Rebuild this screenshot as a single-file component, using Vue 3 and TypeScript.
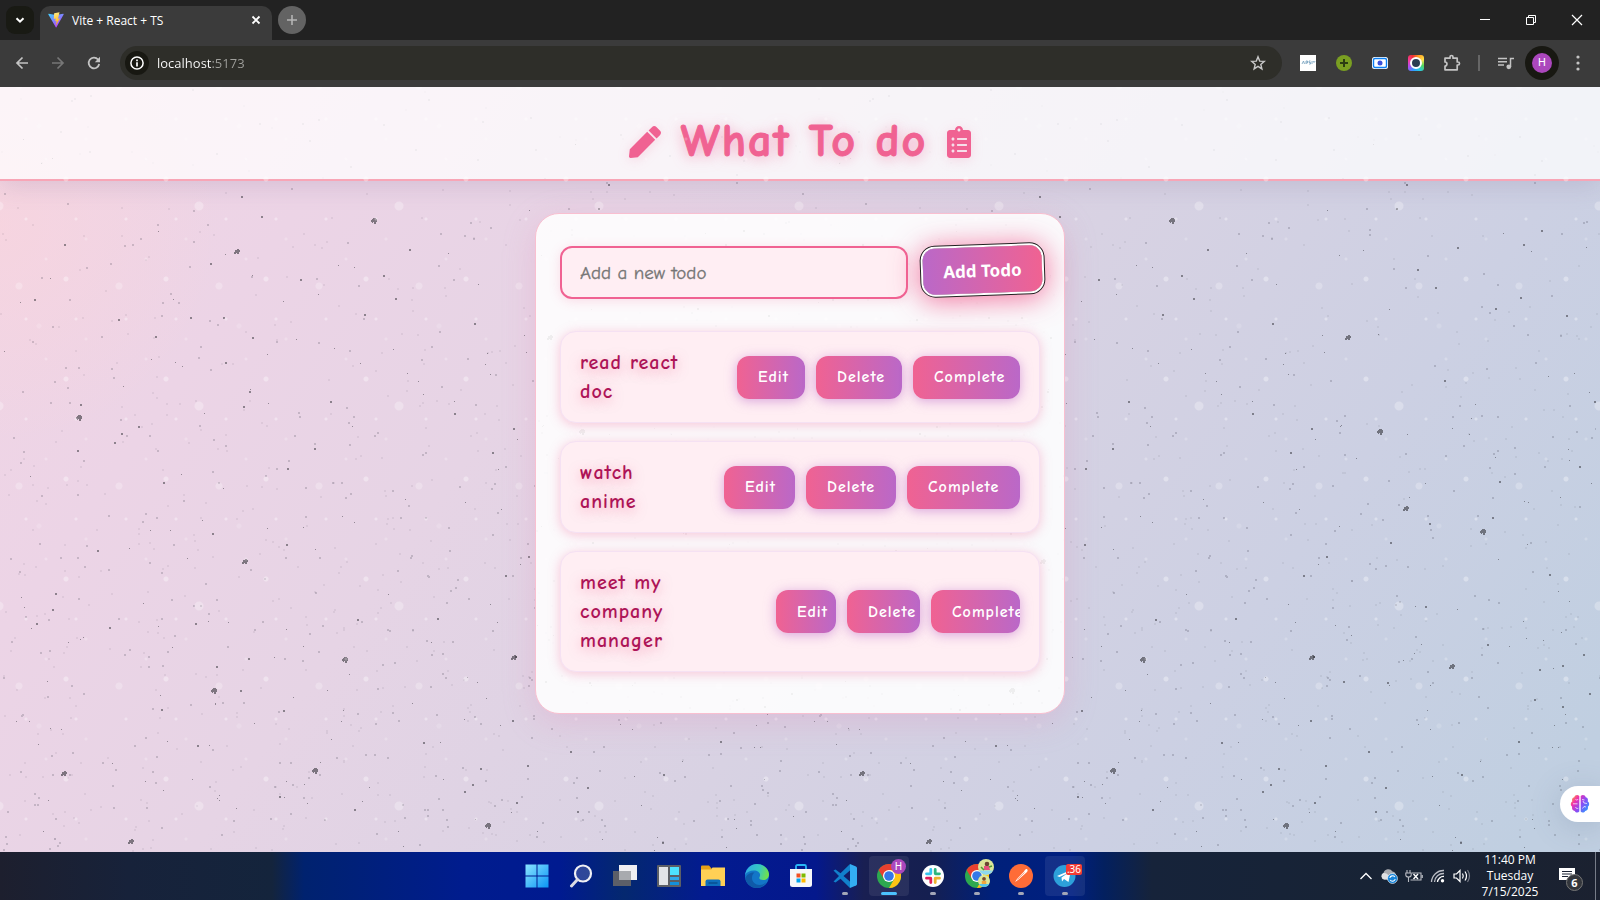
<script setup lang="ts">
import { ref } from 'vue'

interface Todo {
  id: number
  text: string
  size: 'regular' | 'roomy' | 'tight'
}

const address = ref('localhost:5173')
const draft = ref('')
const todos = ref<Todo[]>([
  { id: 1, text: 'read react doc', size: 'regular' },
  { id: 2, text: 'watch anime', size: 'roomy' },
  { id: 3, text: 'meet my company manager', size: 'tight' },
])

function addTodo() {
  const text = draft.value.trim()
  if (!text) return
  todos.value.push({ id: Date.now(), text, size: 'regular' })
  draft.value = ''
}

function removeTodo(id: number) {
  todos.value = todos.value.filter((t) => t.id !== id)
}

/* Paper texture: one tile of ink flecks, repeated across the page. */
const TILE_W = 798
const TILE_H = 768

const flecks: number[][] = [
  [64, 157], [34, 212], [241, 109], [261, 129], [210, 176], [300, 192], [383, 188], [409, 162], [395, 211],
  [364, 227], [474, 236], [118, 232], [223, 230], [155, 249], [252, 250], [190, 230], [225, 275], [249, 304],
  [243, 319], [314, 361], [80, 317], [138, 339], [121, 346], [114, 355], [77, 363], [287, 381], [163, 395],
  [330, 314], [454, 326], [492, 365], [212, 446], [97, 463], [286, 457], [55, 506], [52, 522], [36, 536],
  [109, 540], [195, 536], [216, 579], [248, 571], [240, 603], [161, 622], [283, 623], [197, 658], [279, 709],
  [354, 722], [357, 532], [437, 531], [480, 681], [505, 488], [515, 569], [472, 697], [464, 704], [423, 655],
  [598, 121], [608, 97], [743, 143], [725, 157], [659, 160], [619, 182], [637, 200], [697, 221], [722, 210],
  [768, 228], [513, 341], [694, 430], [796, 314], [781, 379], [701, 394], [646, 293], [592, 455], [631, 436],
  [751, 487], [627, 519], [545, 594], [589, 595], [741, 582], [764, 578], [785, 567], [791, 606], [764, 619],
  [736, 612], [720, 654], [663, 687], [662, 755], [587, 700], [577, 724], [570, 664], [512, 633], [527, 678],
  [516, 715], [528, 469], [689, 557],
]
const blots: number[][] = [
  [374, 134], [237, 165], [79, 331], [245, 475], [345, 573], [64, 687], [315, 684], [131, 755], [488, 739],
  [550, 251], [582, 345], [608, 422], [685, 445], [654, 580], [214, 604], [514, 571],
]

function seeded(seed: number) {
  let s = seed
  return () => {
    s = (s * 16807) % 2147483647
    return s / 2147483647
  }
}

const random = seeded(5173)

function grains(count: number, size: number): string {
  let d = ''
  for (let i = 0; i < count; i++) {
    const x = Math.floor(random() * TILE_W)
    const y = Math.floor(Math.pow(random(), 0.68) * TILE_H)
    d += `M${x} ${y}h${size}v${size}h-${size}z`
  }
  return d
}

const haze = grains(620, 2)
const grit = grains(430, 2)
const grain = grains(190, 1)
const fleckPath = flecks.map(([x, y]) => `M${x} ${y}h2v2h-2z`).join('')
const blotPath = blots
  .map(([x, y], i) =>
    i % 2
      ? `M${x - 3} ${y}h1v-2h2v-1h2v1h1v2h-1v2h-2v-1h-1v1h-2z`
      : `M${x - 3} ${y - 1}h1v-1h1v-1h3v1h1v3h-1v2h-2v-2h-1v1h-1v-1h-1z`,
  )
  .join('')
</script>

<template>
  <div class="screen">
    <header class="browser">
      <div class="tabs">
        <button class="tab-search" aria-label="Search tabs">
          <svg width="10" height="10" viewBox="0 0 10 10"><path d="M1.5 3.2 5 6.7l3.5-3.5" fill="none" stroke="#fff" stroke-width="2" /></svg>
        </button>
        <div class="tab">
          <svg width="16" height="16" viewBox="0 0 32 32">
            <defs>
              <linearGradient id="vite-a" x1="0" y1="0" x2=".7" y2="1"><stop offset="0" stop-color="#41d1ff" /><stop offset="1" stop-color="#bd34fe" /></linearGradient>
              <linearGradient id="vite-b" x1=".4" y1="0" x2=".6" y2="1"><stop offset="0" stop-color="#ffea83" /><stop offset="1" stop-color="#ffa800" /></linearGradient>
            </defs>
            <path d="m31.3 4.800-14.400 25.900c-.3.5-1 .5-1.300 0L.7 4.800c-.3-.6.2-1.300.800-1.200l14.500 2.600 14.400-2.600c.7-.1 1.200.6.900 1.200z" fill="url(#vite-a)" />
            <path d="M23 .5 12.300 2.600l-.6 11.200 3.900-.9-1.300 5.800 3-.9-2 9.700 8.700-15-4 .8z" fill="url(#vite-b)" />
          </svg>
          <span class="tab-title">Vite + React + TS</span>
          <button class="tab-close" aria-label="Close tab">
            <svg width="10" height="10" viewBox="0 0 10 10"><path d="m1.500 1.500 7 7m0-7-7 7" stroke="#fff" stroke-width="1.800" /></svg>
          </button>
        </div>
        <button class="tab-new" aria-label="New tab">
          <svg width="12" height="12" viewBox="0 0 12 12"><path d="M6 1v10M1 6h10" stroke="#b5b5b5" stroke-width="1.600" /></svg>
        </button>
        <div class="window-controls">
          <button aria-label="Minimize"><svg width="12" height="12" viewBox="0 0 12 12"><path d="M1 5.500h10" stroke="#fff" /></svg></button>
          <button aria-label="Restore"><svg width="12" height="12" viewBox="0 0 12 12"><path d="M1.500 3.500h7v7h-7zM3.500 3V1.500h7v7H9" fill="none" stroke="#fff" /></svg></button>
          <button aria-label="Close"><svg width="12" height="12" viewBox="0 0 12 12"><path d="m1 1 10 10M11 1 1 11" stroke="#fff" stroke-width="1.200" /></svg></button>
        </div>
      </div>
      <div class="toolbar">
        <button class="nav" aria-label="Back"><svg width="14" height="14" viewBox="0 0 14 14"><path d="M13 7H2m5.500-5.500L2 7l5.500 5.500" fill="none" stroke="#c4c4c4" stroke-width="1.700" /></svg></button>
        <button class="nav" aria-label="Forward"><svg width="14" height="14" viewBox="0 0 14 14"><path d="M1 7h11M6.500 1.500 12 7l-5.500 5.500" fill="none" stroke="#777" stroke-width="1.700" /></svg></button>
        <button class="nav" aria-label="Reload"><svg width="14" height="14" viewBox="0 0 14 14"><path d="M12.200 8A5.300 5.300 0 1 1 11 3.500l1.300 1.600" fill="none" stroke="#c4c4c4" stroke-width="1.800" /><path d="M13 .800v5.400H7.800z" fill="#c4c4c4" /></svg></button>
        <div class="omnibox">
          <button class="site-info" aria-label="Site information">
            <svg width="14" height="14" viewBox="0 0 14 14"><circle cx="7" cy="7" r="6.100" fill="none" stroke="#fff" stroke-width="1.500" /><path d="M7 6.300V10.400M7 3.600v1.700" stroke="#fff" stroke-width="1.700" /></svg>
          </button>
          <input v-model="address" class="address" type="text" aria-label="Address" />
          <button class="bookmark" aria-label="Bookmark this tab">
            <svg width="16" height="16" viewBox="0 0 16 16"><path d="m8 1.800 1.700 4.300 4.600.3-3.500 3 1.100 4.500L8 11.400l-3.900 2.500 1.100-4.500-3.500-3 4.600-.3z" fill="none" stroke="#c8c8c8" stroke-width="1.400" /></svg>
          </button>
        </div>
        <div class="extensions">
          <button aria-label="APSIY extension"><svg width="16" height="16" viewBox="0 0 16 16"><path d="M0 0h16v16H0z" fill="#fff" /><path d="m2 9 1.500-3 1 3M6 9V6h1.500v2H6M10.500 6H9v1.500h1.500V9H9M12 9V6m1 0 1 1.500L15.200 6" fill="none" stroke="#6f9dbb" stroke-width=".8" /></svg></button>
          <button aria-label="Plus extension"><svg width="16" height="16" viewBox="0 0 16 16"><circle cx="8" cy="8" r="8" fill="#7a9f22" /><path d="M8 4v8M4 8h8" stroke="#2c3d12" stroke-width="2" /></svg></button>
          <button aria-label="Recorder extension"><svg width="16" height="16" viewBox="0 0 16 16"><rect y="2" width="16" height="12" rx="2.500" fill="#fff" /><rect x="1.500" y="3.500" width="13" height="9" rx="1.500" fill="#fff" stroke="#0c7ff2" stroke-width="1.400" /><circle cx="8" cy="8" r="2.500" fill="#3a50d8" /></svg></button>
          <button aria-label="Lens extension"><span class="lens"><span></span></span></button>
          <button aria-label="Extensions"><svg width="18" height="18" viewBox="0 0 18 18"><path d="M2 4.200h5V3a1.500 1.500 0 0 1 3 0v1.200h4.200V8h.8a1.500 1.500 0 0 1 0 3h-.8v4.800H2V12c2.600 0 2.600-4 0-4z" fill="none" stroke="#c4c4c4" stroke-width="1.700" stroke-linejoin="round" /></svg></button>
        </div>
        <span class="divider"></span>
        <button class="media" aria-label="Media controls"><svg width="16" height="14" viewBox="0 0 16 14"><path d="M0 2.500h9M0 5.700h9M0 9h6" stroke="#c4c4c4" stroke-width="1.500" /><path d="M12.500 11V2.500H16" fill="none" stroke="#c4c4c4" stroke-width="1.500" /><circle cx="10.800" cy="10.800" r="2.400" fill="#c4c4c4" /></svg></button>
        <button class="profile" aria-label="Profile H"><span>H</span></button>
        <button class="menu" aria-label="Menu"><svg width="4" height="16" viewBox="0 0 4 16"><g fill="#c4c4c4"><circle cx="2" cy="2" r="1.600" /><circle cx="2" cy="8" r="1.600" /><circle cx="2" cy="14" r="1.600" /></g></svg></button>
      </div>
    </header>

    <div class="page">
      <svg class="texture" aria-hidden="true" width="100%" height="100%">
        <defs>
          <pattern id="paper" :width="TILE_W" :height="TILE_H" patternUnits="userSpaceOnUse">
            <path :d="haze" fill="#3c3c50" opacity=".08" />
            <path :d="grit" fill="#333340" opacity=".2" />
            <path :d="grain" fill="#2c2c34" opacity=".45" />
            <path :d="fleckPath" fill="#26262c" opacity=".48" />
            <path :d="blotPath" fill="#26262c" opacity=".55" />
          </pattern>
        </defs>
        <rect width="100%" height="100%" fill="url(#paper)" />
      </svg>

      <div class="title-bar">
        <h1>
          <svg width="32" height="32" viewBox="0 0 512 512"><path fill="currentColor" d="M290.740 93.240l128.020 128.020-277.990 277.990-114.140 12.600C11.350 513.540-1.560 500.620.14 485.340l12.700-114.220 277.900-277.880zm207.200-19.060l-60.110-60.110c-18.750-18.750-49.160-18.750-67.910 0l-56.550 56.550 128.020 128.020 56.550-56.550c18.750-18.760 18.750-49.160 0-67.910z" /></svg>
          <span>What To do</span>
          <svg width="24" height="32" viewBox="0 0 384 512"><path fill="currentColor" d="M336 64h-80c0-35.300-28.700-64-64-64s-64 28.700-64 64H48C21.500 64 0 85.500 0 112v352c0 26.500 21.500 48 48 48h288c26.500 0 48-21.500 48-48V112c0-26.500-21.500-48-48-48zM96 424c-13.300 0-24-10.700-24-24s10.700-24 24-24 24 10.700 24 24-10.700 24-24 24zm0-96c-13.300 0-24-10.700-24-24s10.700-24 24-24 24 10.700 24 24-10.700 24-24 24zm0-96c-13.300 0-24-10.700-24-24s10.700-24 24-24 24 10.700 24 24-10.700 24-24 24zm96-192c13.300 0 24 10.700 24 24s-10.700 24-24 24-24-10.700-24-24 10.700-24 24-24zm128 368c0 4.400-3.600 8-8 8H168c-4.400 0-8-3.600-8-8v-16c0-4.400 3.600-8 8-8h144c4.400 0 8 3.600 8 8v16zm0-96c0 4.400-3.600 8-8 8H168c-4.400 0-8-3.600-8-8v-16c0-4.400 3.600-8 8-8h144c4.400 0 8 3.600 8 8v16zm0-96c0 4.400-3.600 8-8 8H168c-4.400 0-8-3.600-8-8v-16c0-4.400 3.600-8 8-8h144c4.400 0 8 3.600 8 8v16z" /></svg>
        </h1>
      </div>

      <main class="card">
        <form class="add-form" @submit.prevent="addTodo">
          <input v-model="draft" type="text" placeholder="Add a new todo" aria-label="New todo" />
          <button type="submit">Add Todo</button>
        </form>
        <ul class="todos">
          <li v-for="todo in todos" :key="todo.id" class="todo" :class="todo.size">
            <span class="todo-text">{{ todo.text }}</span>
            <div class="actions">
              <button type="button">Edit</button>
              <button type="button" @click="removeTodo(todo.id)">Delete</button>
              <button type="button">Complete</button>
            </div>
          </li>
        </ul>
      </main>

      <button class="assistant" aria-label="Assistant">
        <svg width="20" height="20" viewBox="0 0 20 20">
          <defs><linearGradient id="brain" x1="0" y1=".1" x2="1" y2=".8"><stop offset="0" stop-color="#ffa928" /><stop offset=".28" stop-color="#f02fae" /><stop offset=".6" stop-color="#8a4cf5" /><stop offset="1" stop-color="#2b9bff" /></linearGradient></defs>
          <path d="M9.300 2C7.500.3 4.800 1 4.300 3.300 2.200 3.600 1.600 5.700 2.300 7.300.3 8.600.3 11.400 2.100 12.700 1.500 15 3 16.800 4.800 16.900c.9 2 3.400 2.100 4.500.6zM10.700 2c1.800-1.700 4.500-1 5 1.300 2.100.3 2.700 2.400 2 4 2 1.300 2 4.100.2 5.400.6 2.300-.9 4.100-2.700 4.200-.9 2-3.400 2.100-4.500.6z" fill="url(#brain)" />
          <path d="M3 9.800h4.500M5.500 5.500c1 .9 2.200.5 2.600-.5M5.500 13c.5 1.500 1.800 1.800 2.800 1.300M17 9.500l-3-.5-1-2M12 5.500l2.500.5M12.500 14.500l1.500-2 2 .5" fill="none" stroke="#fff" stroke-width=".9" opacity=".8" />
        </svg>
      </button>
    </div>

    <footer class="taskbar">
      <nav class="apps" aria-label="Taskbar">
        <button class="app" aria-label="Start">
          <svg width="24" height="24" viewBox="0 0 24 24"><defs><linearGradient id="win" x1="0" y1="0" x2="1" y2="1"><stop offset="0" stop-color="#8ae4ff" /><stop offset="1" stop-color="#0a95f5" /></linearGradient></defs><path d="M.5.500h11v11H.5zM12.500.500h11v11h-11zM.5 12.500h11v11H.5zM12.500 12.500h11v11h-11z" fill="url(#win)" /></svg>
        </button>
        <button class="app" aria-label="Search">
          <svg width="24" height="24" viewBox="0 0 24 24"><circle cx="14" cy="9.500" r="8" fill="#fff" fill-opacity=".18" stroke="#f0f0f4" stroke-width="2.200" /><path d="m8.500 15.500-6 6.500" stroke="#dcdce4" stroke-width="3" stroke-linecap="round" /></svg>
        </button>
        <button class="app" aria-label="Task view">
          <svg width="24" height="24" viewBox="0 0 24 24"><path d="M6 1h18v15H6z" fill="#f0f0f2" /><path d="M0 7h18v15H0z" fill="#5c5f68" /><path d="M6 7h12v9H6z" fill="#a8aaae" /></svg>
        </button>
        <button class="app" aria-label="Widgets">
          <svg width="24" height="24" viewBox="0 0 24 24"><rect y="1" width="24" height="22" rx="1" fill="#5c5f66" /><path d="M2 3h9v18H2z" fill="#e2e4e8" /><path d="M13 3h9v8h-9z" fill="#4de2ff" /><path d="M13 13h9v3h-9z" fill="#2fa8ea" /><path d="M13 18h9v3h-9z" fill="#1490dc" /></svg>
        </button>
        <button class="app" aria-label="File Explorer">
          <svg width="24" height="24" viewBox="0 0 24 24"><path d="M0 2.500q0-1 1-1h7l2.500 3V9H0z" fill="#e8a016" /><path d="M0 5.500h10l1.500-2H24v18.500H0z" fill="#ffd055" /><path d="M4.500 22v-4.500q0-2 2-2h11q2 0 2 2V22z" fill="#0e6ebd" /><path d="M7.500 19h9" stroke="#0a4f90" stroke-width="1.500" /></svg>
        </button>
        <button class="app" aria-label="Edge">
          <svg width="24" height="24" viewBox="0 0 24 24"><defs><linearGradient id="edge-a" x1="0" y1=".2" x2="1" y2=".4"><stop offset="0" stop-color="#2fa9e8" /><stop offset=".6" stop-color="#36c8c0" /><stop offset="1" stop-color="#6fe04c" /></linearGradient></defs><circle cx="12" cy="12" r="12" fill="#1376c8" /><path d="M.1 11C1 4.500 6 0 12 0c7 0 12 5 12 10.500 0 3.500-2.600 5.500-5.800 5.500-2.200 0-4-1-4-2 0-.8.900-1.300.9-3C15.100 8.500 12.300 6.500 9 6.500c-4 0-7.500 1.500-8.900 4.500z" fill="url(#edge-a)" /><path d="M9.500 8.500C7.500 10 7 12 7 14c0 4 3.500 7 7.500 7 3 0 5.500-1.300 7-3-2.500 4-6 6-9.500 6C6 24 1.500 20 .3 14.500 1.500 10.500 5.500 8 9.500 8.500z" fill="#0f5aa8" /></svg>
        </button>
        <button class="app" aria-label="Microsoft Store">
          <svg width="24" height="24" viewBox="0 0 24 24"><path d="M7 6V2.500Q7 1 8.500 1h7Q17 1 17 2.500V6" fill="none" stroke="#29b6f6" stroke-width="1.800" /><path d="M1 5h22v15.500q0 2.500-2.500 2.500h-17Q1 23 1 20.500z" fill="#f6f7f9" /><path d="M7.500 9.500h4v4h-4z" fill="#f25022" /><path d="M12.500 9.500h4v4h-4z" fill="#7fba00" /><path d="M7.500 14.500h4v4h-4z" fill="#00a4ef" /><path d="M12.500 14.500h4v4h-4z" fill="#ffb900" /></svg>
        </button>
        <button class="app running" aria-label="Visual Studio Code">
          <svg width="24" height="24" viewBox="0 0 24 24"><path d="M17 0 7.500 9.200 2.500 5.500.5 6.500 6 12 .5 17.500l2 1 5-3.700L17 24l.5-6L10.500 12l7-6z" fill="#1180cc" /><path d="m17 0 6 2.500q1 .5 1 1.500v16q0 1-1 1.500L17 24z" fill="#33adf3" /></svg>
        </button>
        <button class="app current" aria-label="Chrome, profile H">
          <svg width="24" height="24" viewBox="0 0 24 24"><circle cx="12" cy="12" r="12" fill="#2da94f" /><path d="M1.600 6A12 12 0 0 1 22.400 6H12L7 15z" fill="#e8402f" /><path d="M22.400 6A12 12 0 0 1 12 24l5.200-9L12 6z" fill="#fdc413" /><circle cx="12" cy="12" r="6" fill="#fff" /><circle cx="12" cy="12" r="4.800" fill="#3478e8" /></svg>
          <span class="badge purple">H</span>
        </button>
        <button class="app running" aria-label="Slack">
          <svg width="24" height="24" viewBox="0 0 24 24"><circle cx="12" cy="12" r="11" fill="#fff" /><g fill="none" stroke-width="2.800" stroke-linecap="round"><path d="M9.800 5.500v4M5.500 9.800h4" stroke="#36c5f0" /><path d="M14.200 5.500v4M14.500 9.800h4" stroke="#2eb67d" /><path d="M14.200 14.500v4M14.500 14.200h4" stroke="#ecb22e" /><path d="M9.800 14.500v4M5.500 14.200h4" stroke="#e01e5a" /></g></svg>
        </button>
        <button class="app running" aria-label="Chrome, second profile">
          <svg width="24" height="24" viewBox="0 0 24 24"><circle cx="12" cy="12" r="12" fill="#2da94f" /><path d="M1.600 6A12 12 0 0 1 22.400 6H12L7 15z" fill="#e8402f" /><path d="M22.400 6A12 12 0 0 1 12 24l5.200-9L12 6z" fill="#fdc413" /><circle cx="12" cy="12" r="6" fill="#fff" /><circle cx="12" cy="12" r="4.800" fill="#3478e8" /></svg>
          <svg class="avatar-small" width="12" height="12" viewBox="0 0 16 16"><circle cx="8" cy="8" r="8" fill="#dbe69a" /><path d="M1 12a8 8 0 0 0 14 0z" fill="#56c4e8" /><circle cx="8" cy="5" r="2.500" fill="#7a4a2c" /><path d="M5 8h6v4H5z" fill="#f0a53c" /></svg>
          <svg class="avatar-big" width="16" height="16" viewBox="0 0 16 16"><circle cx="8" cy="8" r="8" fill="#dbe69a" /><path d="M1 11.500a8 8 0 0 0 14 0z" fill="#8ed8ee" /><circle cx="9" cy="5" r="2.300" fill="#6a4630" /><path d="M6 7h5l1 4H6z" fill="#e5507c" /><path d="m3 8 3 3M11 8l3-1" stroke="#4f9a35" stroke-width="1.500" /></svg>
        </button>
        <button class="app running" aria-label="Postman">
          <svg width="24" height="24" viewBox="0 0 24 24"><circle cx="12" cy="12" r="12" fill="#ff6c37" /><path d="m6 18 2-3 7-7.500q1-3 3-2.500 1.500 1.500-.5 3.500L9 16z" fill="#fff" /><path d="m8.500 15.500 7-7" stroke="#ff6c37" stroke-width=".6" /></svg>
        </button>
        <button class="app running hot" aria-label="Telegram, 36 unread">
          <svg width="24" height="24" viewBox="0 0 24 24"><circle cx="11.500" cy="12" r="11" fill="#2da0da" /><path d="m4 12 14-6-2.500 12-4.500-3-2 2.500-.5-4L15 9l-8.500 4z" fill="#fff" /></svg>
          <span class="badge red">.36</span>
        </button>
      </nav>
      <div class="tray">
        <button aria-label="Show hidden icons"><svg width="14" height="10" viewBox="0 0 14 10"><path d="m1.500 8 5.500-5.500L12.500 8" fill="none" stroke="#fff" stroke-width="1.300" /></svg></button>
        <button aria-label="OneDrive"><svg width="18" height="16" viewBox="0 0 18 16"><path d="M4 11.500a3.500 3.500 0 0 1-.5-6.500A5 5 0 0 1 12.500 3.500 4 4 0 0 1 16 8v3.500z" fill="#a9abb0" /><path d="M4 11.500a3.500 3.500 0 0 1-.5-6.500c3 0 4 1 6 3.500l3 3z" fill="#dfe0e3" /><circle cx="12.500" cy="10.500" r="5" fill="#1683d8" stroke="#fff" stroke-width=".6" /><path d="M9.800 10a2.800 2.800 0 0 1 5-1M15.200 11a2.800 2.800 0 0 1-5 1" fill="none" stroke="#fff" stroke-width="1.100" /></svg></button>
        <button aria-label="Battery"><svg width="18" height="14" viewBox="0 0 18 14"><path d="M7 4h9v7H5.500M17.300 6v3M2 1v3M5 1v3M.8 4h5.400v2q0 2-2.700 2T.8 6zM3.500 8v5" fill="none" stroke="#b8bbc2" stroke-width="1.100" /><path d="m8.500 5 4.500 5M13 5l-4.500 5" stroke="#fff" stroke-width="1.400" /></svg></button>
        <button aria-label="Network"><svg width="16" height="14" viewBox="0 0 16 14"><g fill="none" stroke="#b9bcc4" stroke-width="1.300"><path d="M1.500 13A12 12 0 0 1 14 1.500" /><path d="M4.500 13A9 9 0 0 1 14 4.500" /><path d="M7.500 13A6 6 0 0 1 14 7.500" stroke="#fff" /></g><circle cx="12.500" cy="11.800" r="1.700" fill="#fff" /></svg></button>
        <button aria-label="Volume"><svg width="18" height="14" viewBox="0 0 18 14"><path d="M1 5h2.500L7 1.500v11L3.500 9H1zM9.500 4.500q1.500 2.500 0 5M12 2.500q3 4.500 0 9" fill="none" stroke="#fff" stroke-width="1.200" /><path d="M14.500 1q4 6 0 12" fill="none" stroke="#777c88" stroke-width="1.200" /></svg></button>
        <time class="clock" datetime="2025-07-15T23:40"><span>11:40 PM</span><span>Tuesday</span><span>7/15/2025</span></time>
        <button class="notices" aria-label="Notifications"><svg width="16" height="16" viewBox="0 0 16 16"><path d="M0 0h16v12h-5l-3 3v-3H0z" fill="#fff" /><path d="M3 3.500h10M3 6h10M3 8.500h6" stroke="#1a2232" /></svg><span>6</span></button>
      </div>
    </footer>
  </div>
</template>

<style>
body {
  background: #e3d3e4;
}
</style>

<style scoped>
* {
  box-sizing: border-box;
}
button {
  border: 0;
  padding: 0;
  background: none;
  font: inherit;
  color: inherit;
  display: grid;
  place-items: center;
}
svg {
  display: block;
}
.screen {
  min-height: 100vh;
  display: flex;
  flex-direction: column;
  font-family: "Noto Sans", sans-serif;
  overflow: hidden;
}

/* Browser chrome */
.tabs {
  height: 40px;
  background: #222;
  display: flex;
  align-items: flex-start;
  padding: 6px 0 0 6px;
}
.tab-search {
  width: 28px;
  height: 28px;
  border-radius: 9px;
  background: #191a14;
}
.tab {
  width: 232px;
  height: 34px;
  margin-left: 6px;
  padding: 0 10px 6px 8px;
  border-radius: 10px 10px 0 0;
  background: #3b3b3b;
  display: flex;
  align-items: center;
  gap: 8px;
  font-family: "Open Sans", sans-serif;
  font-size: 12px;
  color: #fff;
}
.tab-title {
  flex: 1;
}
.tab-close {
  width: 12px;
  height: 16px;
}
.tab-new {
  width: 28px;
  height: 28px;
  margin-left: 6px;
  border-radius: 50%;
  background: #636363;
}
.window-controls {
  margin-left: auto;
  display: flex;
}
.window-controls button {
  width: 46px;
  height: 28px;
}
.toolbar {
  height: 47px;
  padding: 0 10px 1px 8px;
  background: #3b3b3b;
  display: flex;
  align-items: center;
}
.nav {
  width: 28px;
  height: 28px;
  margin-right: 8px;
}
.omnibox {
  flex: 1;
  height: 34px;
  margin-left: 4px;
  padding: 0 14px 0 5px;
  border-radius: 17px;
  background: #2e2e29;
  display: flex;
  align-items: center;
}
.site-info {
  width: 24px;
  height: 24px;
  border-radius: 50%;
  background: #181812;
}
.address {
  flex: 1;
  height: 24px;
  margin-left: 8px;
  padding: 0;
  border: 0;
  outline: 0;
  font-family: "Open Sans", sans-serif;
  font-size: 13px;
  color: transparent;
  background: linear-gradient(90deg, #fff 55px, #a0a09c 55px);
  background-clip: text;
  -webkit-background-clip: text;
}
.bookmark {
  width: 20px;
  height: 24px;
}
.extensions {
  display: flex;
  margin-left: 8px;
}
.extensions button {
  width: 36px;
  height: 28px;
}
.lens {
  width: 16px;
  height: 16px;
  border-radius: 3px;
  background: conic-gradient(from 20deg, #ff9d1f, #ffe14a, #54d75a, #29c8e8, #2f9bff, #b44cf0, #f53ba0, #f0302e, #ff9d1f);
  display: grid;
  place-items: center;
}
.lens span {
  width: 12px;
  height: 12px;
  border: 2px solid #fff;
  border-radius: 50%;
  background: #2c3d52;
}
.divider {
  width: 2px;
  height: 16px;
  margin: 0 8px 0 8px;
  background: #666;
}
.media {
  width: 36px;
  height: 28px;
  margin-right: 1px;
}
.profile {
  width: 34px;
  height: 34px;
  border-radius: 50%;
  background: #181812;
}
.profile span {
  width: 20px;
  height: 20px;
  border-radius: 50%;
  background: #ab47bc;
  color: #fff;
  font: 11px/20px Roboto, sans-serif;
}
.menu {
  width: 24px;
  height: 28px;
  margin-left: 7px;
}

/* Page */
.page {
  flex: 1;
  position: relative;
  overflow: hidden;
  padding-bottom: 40px;
  background:
    radial-gradient(circle at 0 18%, rgba(250, 212, 220, 0.6), transparent 220px),
    linear-gradient(125deg, #f2d5e5 0%, #ecd4e6 18%, #e6d4e5 34%, #d8d2e3 56%, #ccd0e3 76%, #c0cfe1 96%);
}
.texture {
  position: absolute;
  inset: 0;
}
.page::before {
  content: "";
  position: absolute;
  inset: 0;
  z-index: 1;
  pointer-events: none;
  background-image:
    radial-gradient(circle, rgba(255, 255, 255, 0.28) 4px, transparent 5px),
    radial-gradient(circle, rgba(255, 255, 255, 0.24) 3px, transparent 4px),
    radial-gradient(circle, rgba(255, 255, 255, 0.34) 2px, transparent 3px),
    radial-gradient(circle, rgba(255, 255, 255, 0.34) 1px, transparent 2px),
    radial-gradient(circle, rgba(255, 255, 255, 0.14) 2px, transparent 3px),
    radial-gradient(circle, rgba(255, 255, 255, 0.2) 1px, transparent 2px),
    radial-gradient(circle, rgba(255, 255, 255, 0.24) 1px, transparent 2px);
  background-size: 200px 200px, 100px 200px, 100px 100px, 50px 100px, 200px 200px, 100px 100px, 100px 100px;
  background-position: 99px 19px, 69px 99px, 16px 42px, 1px 82px, 139px 139px, 36px 102px, 96px 22px;
}
.title-bar {
  position: relative;
  height: 94px;
  padding-top: 18px;
  border-bottom: 2px solid #f8a5b6;
  background: rgba(255, 255, 255, 0.74);
  box-shadow: 0 4px 24px rgba(120, 100, 140, 0.2);
}
.title-bar h1 {
  margin: 0;
  display: flex;
  align-items: center;
  justify-content: center;
  gap: 20px;
  color: #f06292;
  font: bold 46px/74px "Comic Neue", Lato, sans-serif;
  letter-spacing: 2px;
  -webkit-text-stroke: 1px #f06292;
  text-shadow: 0 2px 14px rgba(240, 98, 146, 0.6);
}
.title-bar svg {
  filter: drop-shadow(0 2px 6px rgba(240, 98, 146, 0.2));
}
.card {
  position: relative;
  z-index: 2;
  width: 530px;
  max-width: 100%;
  margin: 32px auto 0;
  padding: 32px 24px 41px;
  border: 1px solid #f9bfd0;
  border-radius: 24px;
  background: rgba(255, 255, 255, 0.88);
  box-shadow: 0 8px 32px rgba(225, 140, 185, 0.28);
}
.add-form {
  display: flex;
  gap: 13px;
  margin-bottom: 32px;
}
.add-form input {
  flex: 1;
  min-width: 0;
  height: 53px;
  padding: 0 18px;
  border: 2px solid #f06292;
  border-radius: 12px;
  outline: 0;
  background: #ffeef3;
  color: #ad1457;
  font: 19px "Comic Neue", Lato, sans-serif;
  box-shadow: 0 2px 12px rgba(240, 98, 146, 0.2);
}
.add-form input::placeholder {
  color: #757575;
  -webkit-text-stroke: 0.3px #757575;
}
.add-form button {
  width: 119px;
  height: 46px;
  border-radius: 12px;
  background: linear-gradient(90deg, #ba68c8, #f06292);
  color: #fff;
  font: bold 17px "Noto Sans", sans-serif;
  transform: translate(2px, 1px) rotate(-2deg);
  box-shadow:
    0 0 0 2px #fff,
    0 0 0 3px #222,
    0 3px 28px 4px rgba(240, 98, 146, 0.85);
}
.todos {
  margin: 0;
  padding: 0;
  list-style: none;
  display: grid;
  gap: 18px;
}
.todo {
  display: flex;
  align-items: center;
  justify-content: space-between;
  padding: 16px 19px;
  border: 1px solid #f5e1f3;
  border-radius: 16px;
  background: #ffeef3;
  box-shadow: 0 2px 12px rgba(240, 98, 146, 0.34);
}
.todo-text {
  width: 108px;
  color: #ad1457;
  font: bold 20px/29px "Comic Neue", Lato, sans-serif;
  letter-spacing: 1px;
  text-shadow: 0 3px 12px rgba(240, 98, 146, 0.5);
}
.actions {
  display: grid;
  gap: 11px;
  grid-template-columns: 68px 86px 107px;
}
.roomy .actions {
  grid-template-columns: 71px 90px 113px;
}
.tight .actions {
  grid-template-columns: 60px 73px 89px;
}
.actions button {
  height: 43px;
  padding: 0 0 0 21px;
  justify-items: start;
  overflow: hidden;
  white-space: nowrap;
  border-radius: 12px;
  background: linear-gradient(90deg, #f06292, #ba68c8);
  color: #fff;
  font: bold 16px "Comic Neue", Lato, sans-serif;
  letter-spacing: 1px;
  box-shadow: 0 2px 12px rgba(186, 104, 200, 0.55);
}
.assistant {
  position: absolute;
  z-index: 2;
  right: 0;
  bottom: 30px;
  width: 40px;
  height: 36px;
  border-radius: 18px 0 0 18px;
  background: #fff;
  box-shadow: 0 4px 30px rgba(90, 110, 140, 0.25);
}

/* Taskbar */
.taskbar {
  position: relative;
  height: 48px;
  padding-left: 2px;
  display: flex;
  justify-content: center;
  background: linear-gradient(90deg, #1d1f2e 0, #17223a 8%, #14243c 17%, #00226f 19%, #001c8e 29%, #001a90 35%, #04286f 39%, #031b90 44%, #04188c 51%, #191f52 54%, #151f50 58%, #00207a 62%, #001f80 67%, #03205f 69%, #16233a 72%, #182334 88%, #1b2130 100%);
}
.apps {
  display: flex;
}
.app {
  position: relative;
  width: 44px;
  height: 48px;
}
.app.current::before,
.app.hot::before {
  content: "";
  position: absolute;
  inset: 4px 2px;
  border-radius: 4px;
  background: rgba(255, 255, 255, 0.08);
}
.app > svg {
  position: relative;
}
.app.running::after,
.app.current::after {
  content: "";
  position: absolute;
  bottom: 5px;
  left: 19px;
  width: 6px;
  height: 3px;
  border-radius: 2px;
  background: #a3a7b8;
}
.app.current::after {
  left: 14px;
  width: 16px;
  background: #4cc2ff;
}
.badge {
  position: absolute;
  color: #fff;
  font: 10px/15px "Noto Sans", sans-serif;
}
.badge.purple {
  top: 7px;
  right: 5px;
  width: 15px;
  border-radius: 50%;
  background: #ab47bc;
}
.badge.red {
  top: 12px;
  right: 5px;
  width: 16px;
  height: 11px;
  border-radius: 2px;
  background: #f23c34;
  line-height: 11px;
}
.app > .avatar-big,
.app > .avatar-small {
  position: absolute;
  top: 7px;
  right: 5px;
}
.app > .avatar-small {
  top: 23px;
  right: 9px;
}
.tray {
  position: absolute;
  right: 4px;
  top: 0;
  height: 48px;
  padding-right: 20px;
  border-right: 1px solid #777c88;
  display: flex;
  align-items: center;
  gap: 7px;
  color: #fff;
}
.clock {
  width: 68px;
  margin: 0 8px 0 -2px;
  display: flex;
  flex-direction: column;
  text-align: center;
  font: 12px/16px "Open Sans", sans-serif;
}
.notices {
  position: relative;
}
.notices span {
  position: absolute;
  left: 7px;
  top: 6px;
  width: 17px;
  height: 17px;
  border: 1px solid #777;
  border-radius: 50%;
  background: #33363c;
  font: bold 11px/15px "Noto Sans", sans-serif;
}
</style>
